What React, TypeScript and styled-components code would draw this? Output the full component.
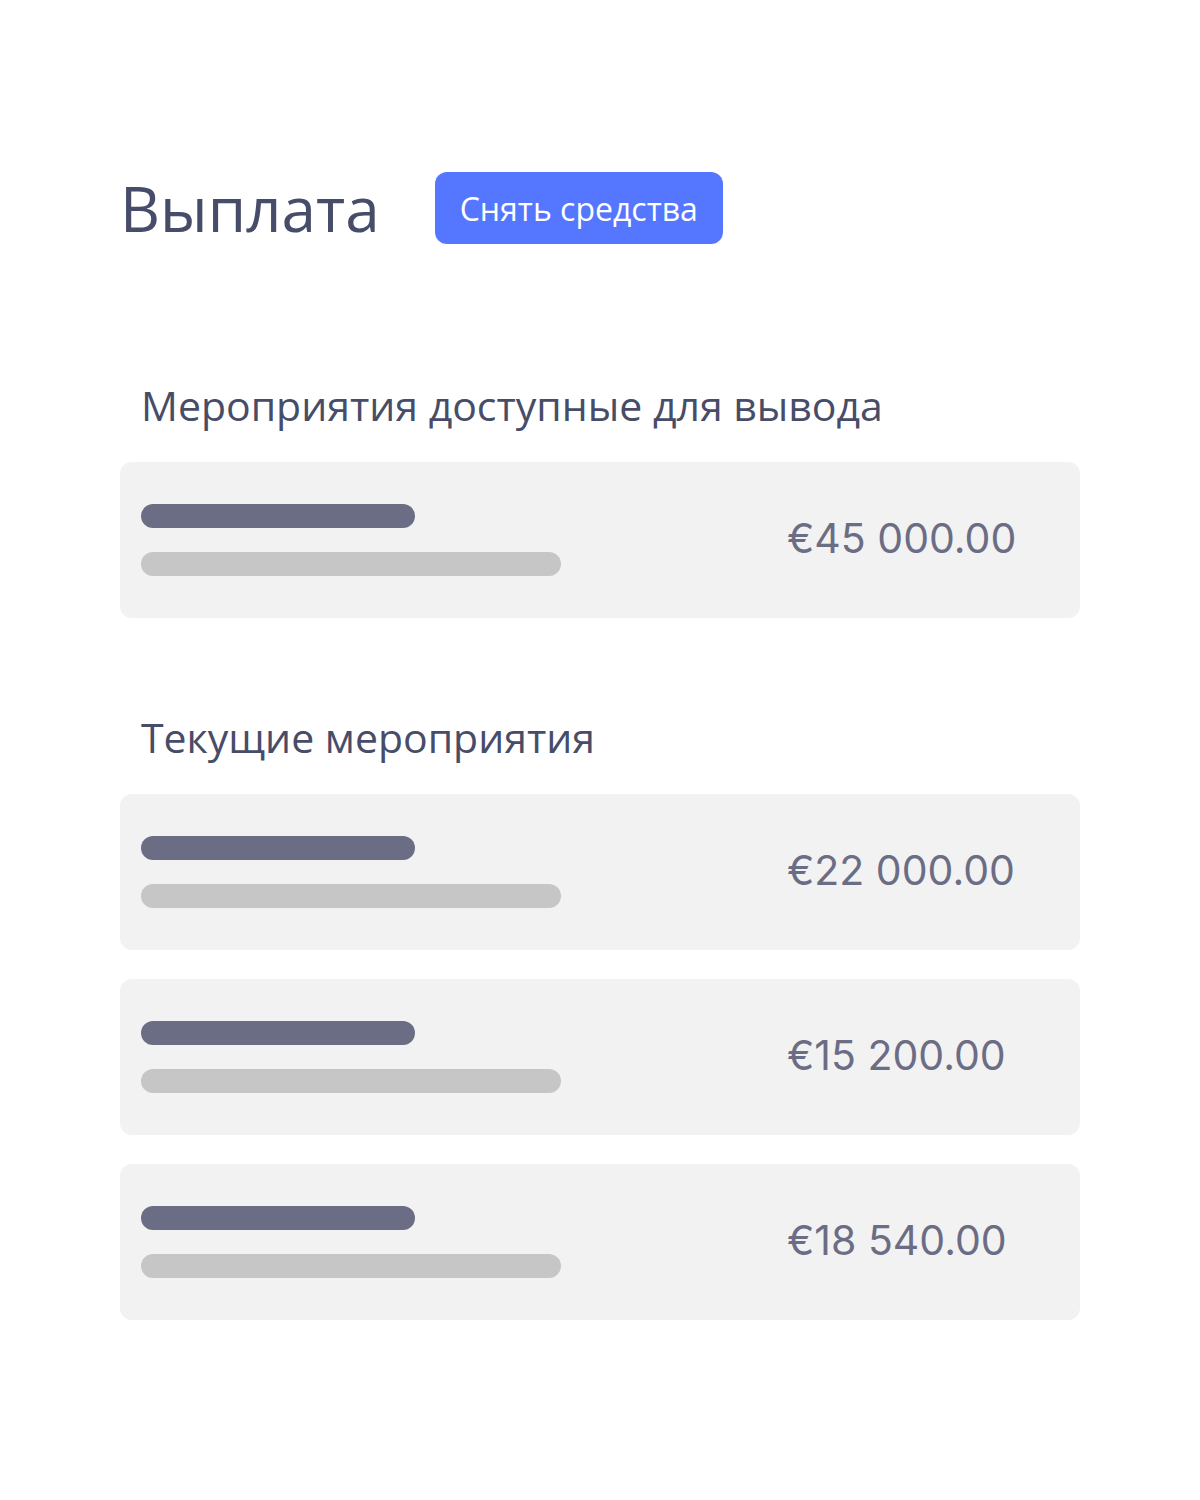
import { FC } from 'react'
import styled, { createGlobalStyle } from 'styled-components'

const GlobalStyle = createGlobalStyle`
  body {
    margin: 0;
    background: #ffffff;
    font-family: 'Open Sans', 'Liberation Sans', sans-serif;
  }
`

type Payout = {
  amount: string
}

const available: Payout[] = [{ amount: '€45 000.00' }]
const current: Payout[] = [
  { amount: '€22 000.00' },
  { amount: '€15 200.00' },
  { amount: '€18 540.00' },
]

const PayoutCard: FC<Payout> = ({ amount }) => (
  <Card>
    <Lines>
      <Bar tone="dark" width={274} />
      <Bar tone="light" width={420} />
    </Lines>
    <Amount>{amount}</Amount>
  </Card>
)

const App: FC = () => (
  <>
    <GlobalStyle />
    <Page>
      <Header>
        <Title>Выплата</Title>
        <WithdrawButton>Снять средства</WithdrawButton>
      </Header>

      <Section>
        <SectionTitle>Мероприятия доступные для вывода</SectionTitle>
        <CardList>
          {available.map((p) => (
            <PayoutCard key={p.amount} amount={p.amount} />
          ))}
        </CardList>
      </Section>

      <Section>
        <SectionTitle>Текущие мероприятия</SectionTitle>
        <CardList>
          {current.map((p) => (
            <PayoutCard key={p.amount} amount={p.amount} />
          ))}
        </CardList>
      </Section>
    </Page>
  </>
)

const Page = styled.div`
  width: 960px;
  padding: 172px 120px 120px;
  display: flex;
  flex-direction: column;
`

const Header = styled.div`
  display: flex;
  align-items: center;
  gap: 55px;
  margin-bottom: 133px;
`

const Title = styled.h1`
  margin: 0;
  font-size: 62px;
  font-weight: 400;
  line-height: 72px;
  color: #474d68;
`

const WithdrawButton = styled.button`
  height: 72px;
  padding: 0 25px;
  border: none;
  border-radius: 12px;
  background: #5576ff;
  color: #ffffff;
  font-family: 'Open Sans', 'Liberation Sans', sans-serif;
  font-size: 32px;
  font-weight: 400;
  cursor: pointer;
`

const Section = styled.section`
  display: flex;
  flex-direction: column;
  margin-bottom: 91px;

  &:last-child {
    margin-bottom: 0;
  }
`

const SectionTitle = styled.h2`
  margin: 0 0 29px 21px;
  font-size: 41px;
  font-weight: 400;
  line-height: 56px;
  color: #474d68;
`

const CardList = styled.div`
  display: flex;
  flex-direction: column;
  gap: 29px;
`

const Card = styled.div`
  height: 156px;
  padding: 0 21px;
  border-radius: 12px;
  background: #f2f2f2;
  display: flex;
  align-items: center;
  box-sizing: border-box;
`

const Lines = styled.div`
  display: flex;
  flex-direction: column;
  gap: 24px;
  width: 646px;
`

const Bar = styled.div<{ tone: 'dark' | 'light'; width: number }>`
  height: 24px;
  width: ${(p) => p.width}px;
  border-radius: 12px;
  background: ${(p) => (p.tone === 'dark' ? '#6b6d85' : '#c6c6c6')};
`

const Amount = styled.div`
  font-family: Inter, 'Liberation Sans', sans-serif;
  font-size: 41px;
  font-weight: 400;
  line-height: 48px;
  margin-top: -4px;
  color: #6b6d85;
`

export default App
